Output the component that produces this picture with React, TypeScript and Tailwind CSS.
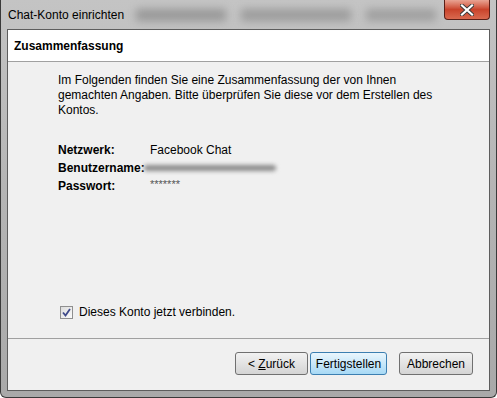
import React from "react";

const font = { fontFamily: '"Segoe UI", "Liberation Sans", Arial, sans-serif' };

const Button = ({ children, primary, className }: { children: React.ReactNode; primary?: boolean; className?: string }) => (
  <button
    className={
      "h-[23px] rounded-[3px] border text-[12px] text-black leading-none " +
      (primary
        ? "border-[#3c7fb1] bg-gradient-to-b from-[#eaf6fd] to-[#a7d9f5] "
        : "border-[#707070] bg-gradient-to-b from-[#f2f2f2] to-[#d4d4d4] ") +
      (className ?? "")
    }
  >
    {children}
  </button>
);

const App = () => {
  return (
    <div
      className="relative w-[497px] h-[398px] flex flex-col overflow-hidden rounded-b-[6px] border-x border-b border-[#3a3a3a] bg-gradient-to-b from-[#c4c4c4] via-[#b4b4b4] to-[#a9a9a9]"
      style={font}
    >
      {/* title bar */}
      <div className="h-[29px] shrink-0 flex items-center pl-[7px] relative">
        {/* blurred background behind the glass */}
        <div className="absolute left-[135px] w-[90px] top-[9px] h-[12px] bg-[#7c7c7c] blur-[4px] opacity-60" />
        <div className="absolute left-[240px] w-[110px] top-[9px] h-[12px] bg-[#7c7c7c] blur-[4px] opacity-55" />
        <div className="absolute left-[365px] w-[70px] top-[9px] h-[12px] bg-[#7c7c7c] blur-[4px] opacity-50" />
        <span className="relative text-[12px] text-black">Chat-Konto einrichten</span>
        {/* close button */}
        <div className="absolute left-[443px] top-0 w-[46px] h-[20px] rounded-b-[4px] border border-t-0 border-[#5a1f17] bg-gradient-to-b from-[#e8a393] via-[#c9432b] to-[#d9694f] flex items-center justify-center">
          <svg width="14" height="12" viewBox="0 0 14 12">
            <path d="M2 1.5 L12 10.5 M12 1.5 L2 10.5" stroke="#3a3a3a" strokeWidth="4" strokeLinecap="square" />
            <path d="M2 1.5 L12 10.5 M12 1.5 L2 10.5" stroke="#ffffff" strokeWidth="2.2" strokeLinecap="square" />
          </svg>
        </div>
      </div>

      {/* inner client area */}
      <div className="flex-1 mx-[6px] mb-[6px] border border-[#5d5d5d] flex flex-col bg-[#f0f0f0]">
        <div className="h-[32px] shrink-0 bg-white border-b border-[#a0a0a0] flex items-center pl-[6px]">
          <span className="text-[12px] font-bold text-black">Zusammenfassung</span>
        </div>

        <div className="flex-1 flex flex-col pl-[50px] pt-[11px]">
          <p className="text-[12px] leading-[15px] text-black w-[400px]">
            Im Folgenden finden Sie eine Zusammenfassung der von Ihnen gemachten Angaben. Bitte überprüfen Sie diese vor dem Erstellen des Kontos.
          </p>

          <div className="mt-[24px] grid grid-cols-[92px_1fr] gap-y-[2px] text-[12px] leading-[16px] text-black">
            <span className="font-bold">Netzwerk:</span>
            <span>Facebook Chat</span>
            <span className="font-bold">Benutzername:</span>
            <span className="relative">
              <span className="absolute left-[-6px] top-[5px] w-[132px] h-[6px] rounded-full bg-[#8a8a8a] blur-[2px]" />
            </span>
            <span className="font-bold">Passwort:</span>
            <span className="text-[11px] leading-[12px] text-[#555]">*******</span>
          </div>

          <div className="flex-1" />

          <label className="flex items-center gap-[6px] mb-[17px] ml-[2px] text-[12px] text-black">
            <span className="w-[13px] h-[13px] border border-[#8f8f8f] bg-gradient-to-br from-[#dcdcdc] to-[#fbfbfb] flex items-center justify-center">
              <svg width="9" height="9" viewBox="0 0 9 9">
                <path d="M1 4.5 L3.5 7.5 L8 1" stroke="#3f4a8a" strokeWidth="1.8" fill="none" />
              </svg>
            </span>
            Dieses Konto jetzt verbinden.
          </label>
        </div>

        <div className="h-[52px] shrink-0 border-t border-[#a0a0a0] flex items-start pt-[13px] pl-[227px]">
          <Button className="w-[73px]">
            &lt; <span className="underline">Z</span>urück
          </Button>
          <Button primary className="w-[77px] ml-[2px]">
            Fertigstellen
          </Button>
          <Button className="w-[74px] ml-[12px]">Abbrechen</Button>
        </div>
      </div>
    </div>
  );
};

export default App;
